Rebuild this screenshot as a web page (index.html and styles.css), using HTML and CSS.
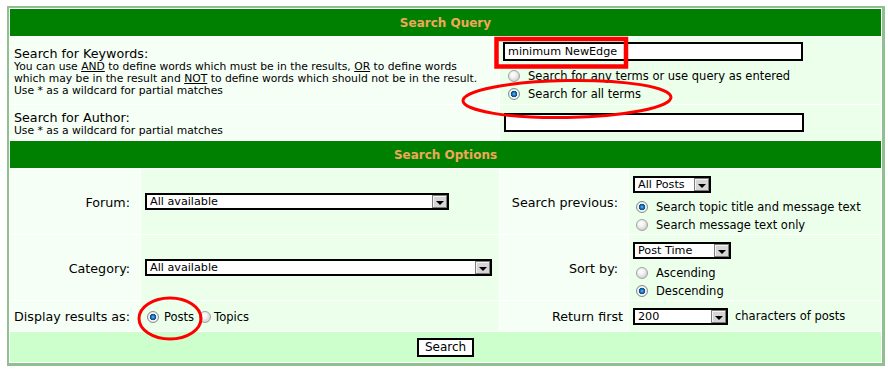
FILE: index.html
```html
<!DOCTYPE html>
<html lang="en">
	<head>
		<meta charset="UTF-8" />
		<title>Search</title>
		<link rel="stylesheet" href="styles.css">
	</head>

	<body>
		<form class="search" action="#">
			<div class="forumline">
				<!--query part-->
				<div class="cat">Search Query</div>

				<div class="cell row1 span2 stack">
					<span class="gen">Search for Keywords:</span>
					<span class="gensmall">You can use <u>AND</u> to define words which must be in the results, <u>OR</u> to define words<br />which may be in the result and <u>NOT</u> to define words which should not be in the result.<br />Use * as a wildcard for partial matches</span>
				</div>
				<div class="cell row2 span2 stack top top--query">
					<input class="post" type="text" value="minimum NewEdge" />
					<label class="opt opt--query"><input class="radio" type="radio" name="terms" /> Search for any terms or use query as entered</label>
					<label class="opt opt--query"><input class="radio" type="radio" name="terms" checked /> Search for all terms</label>
				</div>

				<div class="cell row1 span2 stack">
					<span class="gen">Search for Author:</span>
					<span class="gensmall">Use * as a wildcard for partial matches</span>
				</div>
				<div class="cell row2 span2 stack">
					<input class="post" type="text" />
				</div>

				<!--options part-->
				<div class="cat">Search Options</div>

				<div class="cell row1 label">Forum:</div>
				<div class="cell row2">
					<span class="dropdown dropdown--forum"><select><option>All available</option></select><span class="dropdown__btn"></span></span>
				</div>
				<div class="cell row1 label">Search previous:</div>
				<div class="cell row2 stack top">
					<span class="dropdown dropdown--posts"><select><option>All Posts</option></select><span class="dropdown__btn"></span></span>
					<label class="opt"><input class="radio" type="radio" name="fields" checked /> Search topic title and message text</label>
					<label class="opt"><input class="radio" type="radio" name="fields" /> Search message text only</label>
				</div>

				<div class="cell row1 label">Category:</div>
				<div class="cell row2">
					<span class="dropdown dropdown--cat"><select><option>All available</option></select><span class="dropdown__btn"></span></span>
				</div>
				<div class="cell row1 label">Sort by:</div>
				<div class="cell row2 stack top">
					<span class="dropdown dropdown--sort"><select><option>Post Time</option></select><span class="dropdown__btn"></span></span>
					<label class="opt"><input class="radio" type="radio" name="dir" /> Ascending</label>
					<label class="opt"><input class="radio" type="radio" name="dir" checked /> Descending</label>
				</div>

				<div class="cell row1 label">Display results as:</div>
				<div class="cell row2 inline">
					<label class="opt opt--tight"><input class="radio" type="radio" name="show" checked /> Posts</label>
					<label class="opt opt--tight"><input class="radio" type="radio" name="show" /> Topics</label>
				</div>
				<div class="cell row1 label label--near">Return first</div>
				<div class="cell row2">
					<span class="dropdown dropdown--chars"><select><option>200</option></select><span class="dropdown__btn"></span></span>
					<span class="gen-opt">characters of posts</span>
				</div>

				<div class="cat-bottom">
					<input class="liteoption" type="submit" value="Search" />
				</div>
			</div>
		</form>

		<!--red marks drawn over the screenshot-->
		<svg class="marks" viewBox="0 0 888 374" aria-hidden="true">
			<rect x="496.5" y="39" width="129.5" height="27.5" />
			<ellipse cx="567" cy="99" rx="104" ry="18.5" transform="rotate(-1 567 99)" />
			<ellipse cx="170" cy="318.5" rx="31" ry="20.5" />
		</svg>
	</body>
</html>
```

FILE: styles.css
```css
body {
	margin: 6px 0 0 7px;
	font-family: "DejaVu Sans", Verdana, sans-serif;
	color: #000;
}
.search {
	margin: 0;
}
/*white background shows through the 1px gaps like cellspacing*/
.forumline {
	width: 871px;
	display: grid;
	grid-template-columns: 130px 358px 128px 252px;
	grid-template-rows: 27px 67px 35px 27px 65px 65px 30px 30px;
	gap: 1px;
	padding: 1px;
	background: #fff;
	border: 2px solid #90c090;
	border-right-width: 3px;
	border-bottom-width: 3px;
}
.cat {
	grid-column: 1 / -1;
	background: #008000;
	color: #f0a858;
	font-size: 12px;
	font-weight: bold;
	display: flex;
	align-items: center;
	justify-content: center;
}
.cat-bottom {
	grid-column: 1 / -1;
	background: #ccffcc;
	display: flex;
	align-items: center;
	justify-content: center;
}
.row1 {
	background: #f5fff5;
}
.row2 {
	background: #ebffeb;
}
.span2 {
	grid-column: span 2;
}
.cell {
	display: flex;
	align-items: center;
	padding: 0 4px;
	min-width: 0;
}
.stack {
	flex-direction: column;
	align-items: flex-start;
	justify-content: center;
}
.row1.stack {
	padding-top: 2px;
}
.top {
	justify-content: flex-start;
	padding-top: 7px;
}
.top--query {
	padding-top: 5px;
	padding-left: 3px;
}
.inline {
	gap: 0;
	padding-top: 2px;
}
.label {
	justify-content: flex-end;
	padding-right: 10px;
	padding-top: 1px;
	font-size: 12.7px;
	white-space: nowrap;
}
.label--near {
	padding-right: 5px;
}
.gen {
	font-size: 12.7px;
	line-height: 15px;
}
.gensmall {
	font-size: 10.75px;
	line-height: 12.3px;
	white-space: nowrap;
}
.gen-opt {
	font-size: 11.5px;
	margin-left: 7px;
}
/*text fields*/
.post {
	width: 300px;
	height: 19px;
	box-sizing: border-box;
	margin: 0 0 6px;
	padding: 0 3px;
	border: 2px solid #000;
	background: #fff;
	font: 11.2px "DejaVu Sans", Verdana, sans-serif;
	outline: none;
}
.stack > .post:only-child {
	margin: 0;
}
/*old style select with grey arrow box*/
.dropdown {
	display: inline-flex;
	height: 17px;
	box-sizing: border-box;
	border: 2px solid #000;
	background: #fff;
}
.top .dropdown {
	margin-bottom: 5px;
}
.dropdown select {
	appearance: none;
	flex: 1;
	min-width: 0;
	border: 0;
	margin: 0;
	padding: 0 3px;
	background: transparent;
	font: 11.2px "DejaVu Sans", Verdana, sans-serif;
	color: #000;
	outline: none;
}
.dropdown__btn {
	width: 15px;
	box-sizing: border-box;
	border: 1px solid #7c7c7c;
	background: #d6d6d6;
	box-shadow: inset 1px 1px #f4f4f4;
	display: flex;
	align-items: center;
	justify-content: center;
}
.dropdown__btn::after {
	content: "";
	margin-top: 3px;
	border-left: 4px solid transparent;
	border-right: 4px solid transparent;
	border-top: 4px solid #000;
}
.dropdown--forum {
	width: 304px;
}
.dropdown--cat {
	width: 347px;
}
.dropdown--posts {
	width: 78px;
}
.dropdown--sort {
	width: 98px;
}
.dropdown--chars {
	width: 95px;
}
/*radio buttons*/
.opt {
	display: flex;
	align-items: center;
	height: 18px;
	font-size: 11.5px;
	white-space: nowrap;
}
.radio {
	appearance: none;
	width: 12px;
	height: 12px;
	margin: 0 8px 0 3px;
	border-radius: 50%;
	border: 1px solid #a0a0a0;
	background: radial-gradient(circle at 40% 35%, #fff 0, #f2f2f2 3px, #cfcfcf 7px);
}
.radio:checked {
	border-color: #8a8a8a;
	background: radial-gradient(circle at 50% 50%, #7fc4f0 0, #1f78c0 1.5px, #0c4a8a 3px, #fff 3.6px, #f0f0f0 4.5px, #c8c8c8 6px);
}
.opt--query .radio {
	margin-left: 5px;
}
.opt--tight .radio {
	margin: 0 5px 0 2px;
}
.opt--tight + .opt--tight {
	margin-left: 3px;
}
.opt--tight + .opt--tight .radio {
	margin-right: 3px;
}
.liteoption {
	height: 19px;
	padding: 0 6px;
	border: 2px solid #000;
	background: #fff;
	font: 12px "DejaVu Sans", Verdana, sans-serif;
	color: #000;
}
/*annotation marks lie over the form*/
.marks {
	position: absolute;
	top: 0;
	left: 0;
	width: 888px;
	height: 374px;
	pointer-events: none;
	fill: none;
	stroke: #f00;
	stroke-width: 3;
}
.marks rect {
	stroke-width: 4.5;
}
```
